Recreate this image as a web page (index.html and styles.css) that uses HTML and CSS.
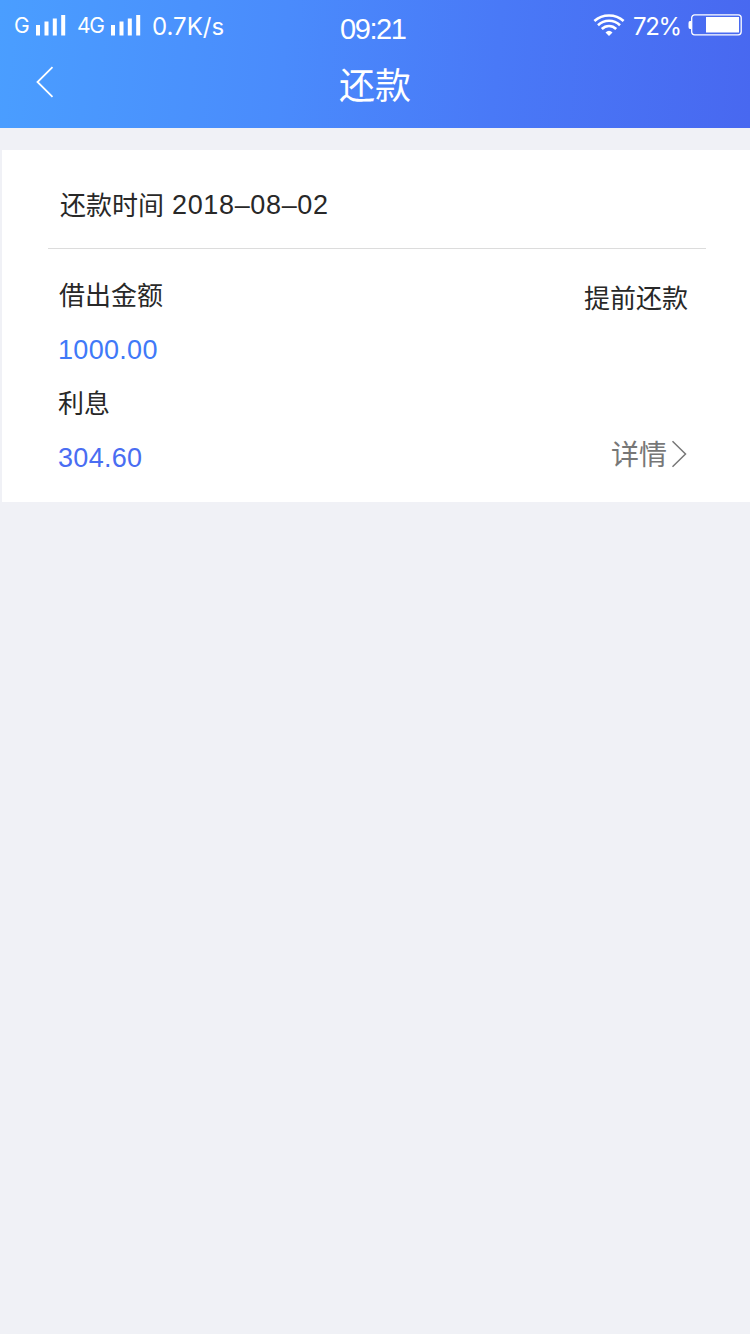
FILE: index.html
```html
<!DOCTYPE html>
<html lang="zh-CN">
<head>
    <meta charset="utf-8">
    <meta name="viewport" content="width=750">
    <meta name="format-detection" content="telephone=no">
    <title>还款</title>
    <link rel="stylesheet" href="styles.css">
</head>
<body>
    <div class="header">
        <div class="status">
            <div class="status-left">
                <span class="net net-g">G</span>
                <svg class="signal" width="30" height="22" viewBox="0 0 30 22" fill="#fff">
                    <path d="M0 11h4v10.500h-4zM8.500 7.500h4v14h-4zM16.800 4.500h4v17h-4zM25.200 1h4v20.500h-4z"/>
                </svg>
                <span class="net net-4g">4G</span>
                <svg class="signal" width="30" height="22" viewBox="0 0 30 22" fill="#fff">
                    <path d="M0 11h4v10.500h-4zM8.500 7.500h4v14h-4zM16.800 4.500h4v17h-4zM25.200 1h4v20.500h-4z"/>
                </svg>
                <span class="speed">0.7K/s</span>
            </div>
            <div class="clock">09:21</div>
            <div class="status-right">
                <svg class="wifi" width="32" height="24" viewBox="0 0 32 24" fill="none" stroke="#fff" stroke-width="2.600">
                    <path d="M1.400 8C9.500 0.600 22.500 0.600 30.600 8"/>
                    <path d="M5 12.200C11.200 6.200 20.800 6.200 27 12.200"/>
                    <path d="M8.800 16C12.900 12 19.100 12 23.200 16"/>
                    <path d="M12.500 19.500Q16 16.200 19.500 19.500L16 23Z" fill="#fff" stroke="none"/>
                </svg>
                <span class="percent">72%</span>
                <svg class="battery" width="55" height="22" viewBox="0 0 55 22">
                    <path d="M3 7H2Q0.500 7 0.500 9v4q0 2 1.500 2h1z" fill="#fff"/>
                    <rect x="3.700" y="0.800" width="49.500" height="20" rx="3" fill="none" stroke="#fff" stroke-width="1.300"/>
                    <rect x="18" y="3" width="33" height="15.500" fill="#fff"/>
                </svg>
            </div>
        </div>
        <div class="nav">
            <a href="javascript:;" class="back">
                <svg width="18" height="32" viewBox="0 0 18 32" fill="none" stroke="#fff" stroke-width="1.800">
                    <path d="M16.500 1.200L1.500 16L16.500 30.800"/>
                </svg>
            </a>
            <h1>还款</h1>
        </div>
    </div>
    <div class="card">
        <div class="date"><span>还款时间</span><span class="num">2018–08–02</span></div>
        <div class="info">
            <div class="money">
                <p class="label label-loan">借出金额</p>
                <p class="num amount">1000.00</p>
                <p class="label">利息</p>
                <p class="num interest">304.60</p>
            </div>
            <div class="action">
                <p class="early">提前还款</p>
                <a href="javascript:;" class="detail">详情<svg width="17" height="28" viewBox="0 0 17 28" fill="none" stroke="#777" stroke-width="1.500">
                    <path d="M1.500 1.200L14.500 14L1.500 26.800"/>
                </svg></a>
            </div>
        </div>
    </div>
</body>
</html>
```
FILE: styles.css
```css
*{
    margin: 0;
    padding: 0;
    box-sizing: border-box;
}
body{
    width: 750px;
    min-height: 1334px;
    background: #f0f1f6;
    color: #282828;
    font-family: "Liberation Sans", "Noto Sans CJK SC", sans-serif;
    font-size: 26px;
}
a{
    color: inherit;
    text-decoration: none;
}
svg{
    display: block;
    flex: none;
}
.header{
    height: 128px;
    background: linear-gradient(95deg, #4a9eff 0%, #4a8bfc 38%, #4979f7 66%, #4868f0 100%);
    color: #fff;
}
/* 状态栏 */
.status{
    display: grid;
    grid-template-columns: 326px 1fr 270px;
    height: 50px;
    padding: 0 7px 0 14px;
}
.status-left,
.status-right{
    display: flex;
    align-items: center;
    height: 46px;
    padding-top: 3px;
    font-family: Inter, sans-serif;
    white-space: nowrap;
}
.net{
    padding-top: 2px;
    font-size: 21px;
    line-height: 42px;
}
.net-g{
    width: 22px;
}
.net-4g{
    width: 34px;
    margin-left: 11px;
    letter-spacing: -1.2px;
}
.speed{
    margin-left: 11px;
    padding-top: 3px;
    font-size: 24px;
}
.clock{
    padding-top: 4px;
    font-size: 29px;
    line-height: 50px;
    letter-spacing: -1.4px;
    white-space: nowrap;
}
.status-right{
    justify-content: flex-end;
}
.percent{
    width: 55px;
    margin-left: 8px;
    padding-top: 3px;
    font-size: 24px;
    letter-spacing: -1.3px;
}
/* 导航 */
.nav{
    display: grid;
    grid-template-columns: 100px 1fr 100px;
    height: 70px;
}
.back{
    padding: 16px 0 0 36px;
}
.nav h1{
    padding-top: 2px;
    font-size: 36px;
    font-weight: 400;
    line-height: 70px;
    text-align: center;
}
.card{
    height: 352px;
    margin: 22px 0 0 2px;
    padding: 0 44px 0 46px;
    background: #fff;
}
.date{
    display: flex;
    height: 99px;
    padding: 1px 12px 0;
    border-bottom: 1px solid #dcdcdc;
    line-height: 110px;
}
.num{
    font-size: 27px;
    letter-spacing: 0.3px;
}
.date .num{
    margin-left: 8px;
    letter-spacing: 0.65px;
    line-height: 108px;
}
.info{
    display: flex;
    justify-content: space-between;
    padding: 0 18px 0 10px;
}
.money{
    padding-top: 20px;
    line-height: 54px;
}
.label-loan{
    padding-left: 1px;
}
.amount{
    color: #4079f8;
}
.interest{
    color: #4a6df2;
}
.action{
    display: flex;
    flex-direction: column;
    align-items: flex-end;
    padding-top: 23px;
    line-height: 54px;
}
.detail{
    display: flex;
    align-items: center;
    margin-top: 103px;
    color: #777;
    font-size: 28px;
}
.detail svg{
    margin: -4px 0 0 4px;
}
```
